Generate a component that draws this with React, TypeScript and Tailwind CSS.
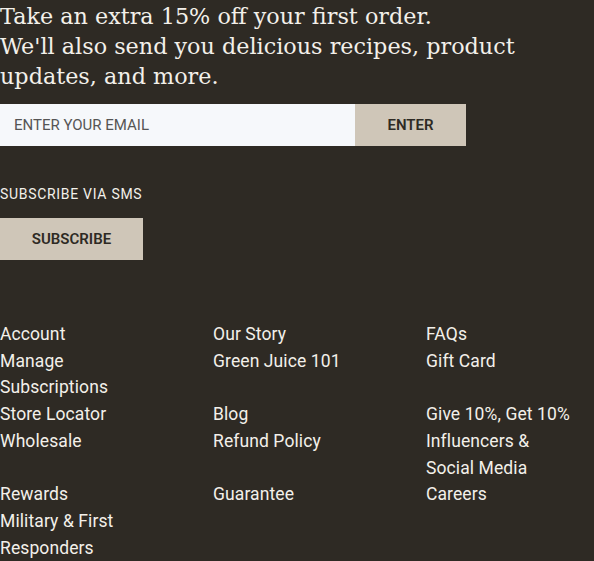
import React from "react";

const groups: string[][][] = [
  [
    ["Account", "Manage Subscriptions"],
    ["Our Story", "Green Juice 101"],
    ["FAQs", "Gift Card"],
  ],
  [
    ["Store Locator", "Wholesale"],
    ["Blog", "Refund Policy"],
    ["Give 10%, Get 10%", "Influencers & Social Media"],
  ],
  [
    ["Rewards", "Military & First Responders"],
    ["Guarantee"],
    ["Careers"],
  ],
];

const sans = "font-['Roboto',sans-serif]";

export default function App() {
  return (
    <div className="min-h-[561px] w-[594px] overflow-hidden bg-[#2e2a24] text-[#f3f0ea]">
      <p className="font-['DejaVu_Serif',serif] text-[22.3px] leading-[30px] pt-[1px] pr-[60px]">
        Take an extra 15% off your first order.
        <br />
        We'll also send you delicious recipes, product updates, and more.
      </p>

      <form className={`mt-[13px] flex ${sans}`} onSubmit={(e) => e.preventDefault()}>
        <input
          className="h-[42px] w-[355px] bg-[#f6f8fb] pl-[14px] text-[15px] text-[#333] placeholder:text-[#555] outline-none"
          placeholder="ENTER YOUR EMAIL"
        />
        <button className="h-[42px] w-[111px] bg-[#cfc6b8] text-[15px] font-semibold text-[#2e2a24]">
          ENTER
        </button>
      </form>

      <div className={`mt-[38px] text-[14px] tracking-[0.7px] ${sans}`}>SUBSCRIBE VIA SMS</div>
      <button
        className={`mt-[13px] h-[42px] w-[143px] bg-[#cfc6b8] text-[15px] font-semibold text-[#2e2a24] ${sans}`}
      >
        SUBSCRIBE
      </button>

      <div className={`mt-[61px] grid grid-cols-[168px_168px_148px] gap-x-[45px] text-[17.5px] leading-[26.7px] tracking-[0.1px] ${sans}`}>
        {groups.map((row, ri) =>
          row.map((cell, ci) => (
            <ul key={`${ri}-${ci}`}>
              {cell.map((l) => (
                <li key={l}>
                  <a href="#">{l}</a>
                </li>
              ))}
            </ul>
          ))
        )}
      </div>
    </div>
  );
}
